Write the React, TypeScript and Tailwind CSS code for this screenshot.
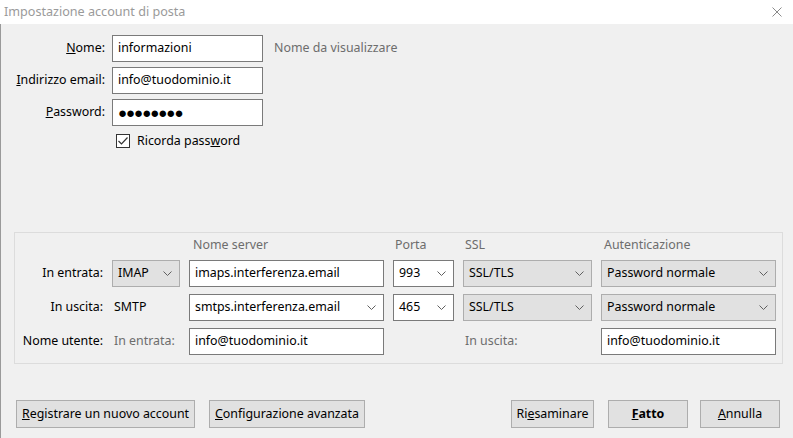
import type { ReactNode } from "react";

function Chevron() {
    return (
        <svg width="9" height="5" viewBox="0 0 9 5" className="shrink-0">
            <path d="M0.5 0.5 L4.5 4.5 L8.5 0.5" fill="none" stroke="#606060" strokeWidth="1" />
        </svg>
    );
}

function TextBox({ value, className = "" }: { value: ReactNode; className?: string }) {
    return (
        <div className={`flex h-[27px] items-center border border-[#7a7a7a] bg-white px-[5px] text-black ${className}`}>
            {value}
        </div>
    );
}

function Combo({ value, gray = false }: { value: string; gray?: boolean }) {
    return (
        <div
            className={`flex h-[27px] items-center justify-between border pl-[5px] pr-[7px] text-black ${
                gray ? "border-[#adadad] bg-[#e1e1e1]" : "border-[#7a7a7a] bg-white"
            }`}
        >
            <span>{value}</span>
            <Chevron />
        </div>
    );
}

function Btn({ children, w, bold = false }: { children: ReactNode; w: string; bold?: boolean }) {
    return (
        <button
            className={`flex h-[28px] items-center justify-center border border-[#adadad] bg-[#e1e1e1] text-black ${w} ${
                bold ? "font-bold" : ""
            }`}
        >
            {children}
        </button>
    );
}

export default function App() {
    return (
        <div className="flex h-[438px] w-[793px] flex-col overflow-hidden bg-[#f0f0f0] font-['Noto_Sans',sans-serif] text-[12.4px] leading-none text-black">
            {/* title bar */}
            <div className="flex h-[24px] shrink-0 items-center justify-between bg-white pl-[4px] pr-[11px]">
                <span className="text-[12.6px] text-[#9a9a9a]">Impostazione account di posta</span>
                <svg width="10" height="10" viewBox="0 0 10 10">
                    <path d="M0.5 0.5 L9.5 9.5 M9.5 0.5 L0.5 9.5" stroke="#8a8a8a" strokeWidth="1" />
                </svg>
            </div>

            <div className="flex flex-1 flex-col border-l border-[#9a9a9a]">
                {/* account fields */}
                <div className="flex flex-col gap-[5px] pt-[11px]">
                    <div className="flex items-center">
                        <label className="w-[104px] text-right">
                            <u>N</u>ome:
                        </label>
                        <TextBox value="informazioni" className="ml-[7px] w-[151px]" />
                        <span className="ml-[11px] text-[#6d6d6d]">Nome da visualizzare</span>
                    </div>
                    <div className="flex items-center">
                        <label className="w-[104px] text-right">
                            <u>I</u>ndirizzo email:
                        </label>
                        <TextBox value="info@tuodominio.it" className="ml-[7px] w-[151px]" />
                    </div>
                    <div className="flex items-center">
                        <label className="w-[104px] text-right">
                            <u>P</u>assword:
                        </label>
                        <TextBox
                            value={<span className="text-[15px] tracking-[-1px]">●●●●●●●●</span>}
                            className="ml-[7px] w-[151px]"
                        />
                    </div>
                    <div className="mt-[3px] flex items-center pl-[115px]">
                        <div className="flex h-[14px] w-[14px] items-center justify-center border border-[#333] bg-white">
                            <svg width="10" height="8" viewBox="0 0 10 8">
                                <path d="M0.5 4 L3.5 7 L9.5 0.5" fill="none" stroke="#333" strokeWidth="1.2" />
                            </svg>
                        </div>
                        <span className="ml-[7px]">
                            Ricorda pass<u>w</u>ord
                        </span>
                    </div>
                </div>

                {/* server settings */}
                <div className="ml-[13px] mr-[10px] mt-[84px] border border-[#dcdcdc] pb-[8px] pt-[6px]">
                    <div className="grid grid-cols-[88px_68px_195px_61px_129px_175px] gap-x-[9px] gap-y-[7px]">
                        <div className="h-[14px]" />
                        <div />
                        <div className="pl-[4px] text-[#6d6d6d]">Nome server</div>
                        <div className="pl-[2px] text-[#6d6d6d]">Porta</div>
                        <div className="pl-[2px] text-[#6d6d6d]">SSL</div>
                        <div className="pl-[3px] text-[#6d6d6d]">Autenticazione</div>

                        <div className="flex items-center justify-end">In entrata:</div>
                        <Combo value="IMAP" gray />
                        <TextBox value="imaps.interferenza.email" />
                        <Combo value="993" />
                        <Combo value="SSL/TLS" gray />
                        <Combo value="Password normale" gray />

                        <div className="flex items-center justify-end">In uscita:</div>
                        <div className="flex items-center pl-[2px]">SMTP</div>
                        <Combo value="smtps.interferenza.email" />
                        <Combo value="465" />
                        <Combo value="SSL/TLS" gray />
                        <Combo value="Password normale" gray />

                        <div className="flex items-center justify-end">Nome utente:</div>
                        <div className="flex items-center pl-[2px] text-[#6d6d6d]">In entrata:</div>
                        <TextBox value="info@tuodominio.it" />
                        <div />
                        <div className="flex items-center pl-[2px] text-[#6d6d6d]">In uscita:</div>
                        <TextBox value="info@tuodominio.it" />
                    </div>
                </div>

                {/* buttons */}
                <div className="mt-[36px] flex items-center pl-[15px] pr-[13px]">
                    <Btn w="w-[179px]">
                        <span>
                            <u>R</u>egistrare un nuovo account
                        </span>
                    </Btn>
                    <Btn w="ml-[14px] w-[156px]">
                        <span>
                            <u>C</u>onfigurazione avanzata
                        </span>
                    </Btn>
                    <div className="flex-1" />
                    <Btn w="w-[83px]">
                        <span>
                            Ri<u>e</u>saminare
                        </span>
                    </Btn>
                    <Btn w="ml-[14px] w-[80px]" bold>
                        <span>
                            <u>F</u>atto
                        </span>
                    </Btn>
                    <Btn w="ml-[12px] w-[80px]">
                        <span>
                            <u>A</u>nnulla
                        </span>
                    </Btn>
                </div>
            </div>
        </div>
    );
}
